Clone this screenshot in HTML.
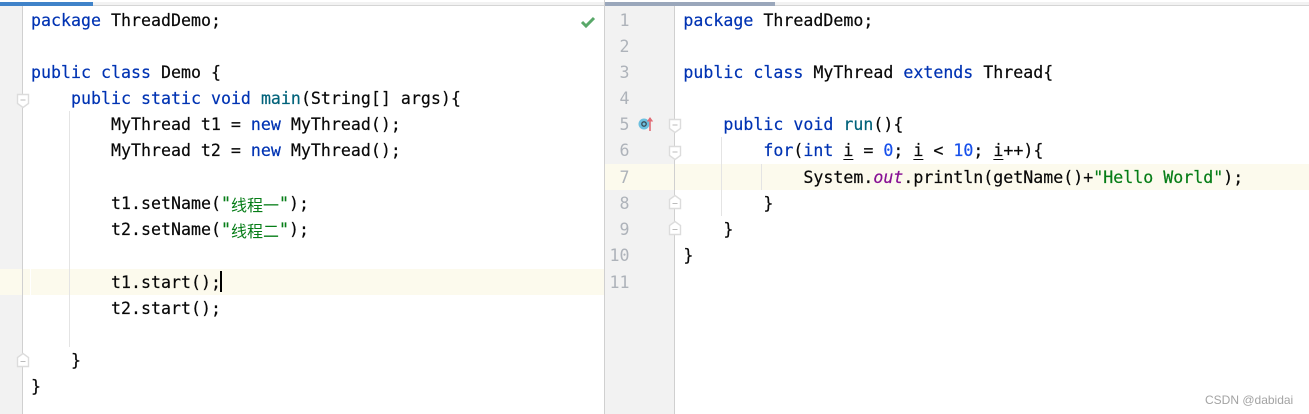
<!DOCTYPE html>
<html><head><meta charset="utf-8">
<style>
html,body{margin:0;padding:0;background:#fff;}
#p{position:relative;width:1309px;height:414px;overflow:hidden;background:#fff;}
.b{position:absolute;}
.l{position:absolute;white-space:pre;font-family:"DejaVu Sans Mono","Liberation Mono","Noto Sans CJK SC",monospace;font-size:16.6px;line-height:26px;height:26px;color:#080808;letter-spacing:.006px;-webkit-text-stroke:.2px currentColor;margin-top:1px;}
.n{position:absolute;width:30px;text-align:right;left:599.5px;font-family:"DejaVu Sans Mono","Liberation Mono",monospace;font-size:16.6px;line-height:26px;color:#aeb3ba;margin-top:1px;}
.k{color:#0033b3}.s{color:#067d17}.d{color:#1750eb}.m{color:#00627a}.o{color:#871094;font-style:italic}.u{text-decoration:underline;text-underline-offset:3px}
.c{font-family:"WenQuanYi Zen Hei","Noto Sans CJK SC",sans-serif;font-size:16px;-webkit-text-stroke:0}
</style></head><body><div id="p">
<!-- backgrounds -->
<div class="b" style="left:0;top:2px;width:1309px;height:3px;background:#f2f2f2"></div>
<div class="b" style="left:0;top:5px;width:1309px;height:1px;background:#d5d5d5"></div>
<div class="b" style="left:0;top:6px;width:22px;height:408px;background:#f2f2f2"></div>
<div class="b" style="left:605px;top:6px;width:69px;height:408px;background:#f2f2f2"></div>
<!-- highlights -->
<div class="b" style="left:0;top:269px;width:604px;height:26px;background:#fcfaed"></div>
<div class="b" style="left:30px;top:269px;width:1px;height:26px;background:#fff"></div>
<div class="b" style="left:605px;top:164px;width:704px;height:26px;background:#fcfaed"></div>
<!-- dividers -->
<div class="b" style="left:22px;top:6px;width:1px;height:408px;background:#d0d0d0"></div>
<div class="b" style="left:604px;top:0;width:1px;height:414px;background:#d0d0d0"></div>
<div class="b" style="left:674px;top:6px;width:1px;height:408px;background:#d0d0d0"></div>
<!-- tabs -->
<div class="b" style="left:0;top:2px;width:93px;height:4px;background:#4083c9"></div>
<div class="b" style="left:605px;top:2px;width:170px;height:4px;background:#9aa7bb"></div>
<!-- indent guides -->
<div class="b" style="left:69px;top:111px;width:1px;height:236px;background:#e4e4e4"></div>
<div class="b" style="left:721px;top:137px;width:1px;height:79px;background:#e4e4e4"></div>
<div class="b" style="left:761px;top:164px;width:1px;height:26px;background:#e4e4e4"></div>

<!-- left code -->
<div class="l" style="left:31px;top:7px"><span class="k">package</span> ThreadDemo;</div>
<div class="l" style="left:31px;top:59px"><span class="k">public class</span> Demo {</div>
<div class="l" style="left:31px;top:85px">    <span class="k">public static void</span> <span class="m">main</span>(String[] args){</div>
<div class="l" style="left:31px;top:111px">        MyThread t1 = <span class="k">new</span> MyThread();</div>
<div class="l" style="left:31px;top:137px">        MyThread t2 = <span class="k">new</span> MyThread();</div>
<div class="l" style="left:111px;top:190px">t1.setName(<span class="s">"</span></div>
<div class="l c s" style="left:231px;top:190px;letter-spacing:0">线程一</div>
<div class="l" style="left:279px;top:190px"><span class="s">"</span>);</div>
<div class="l" style="left:111px;top:216px">t2.setName(<span class="s">"</span></div>
<div class="l c s" style="left:231px;top:216px;letter-spacing:0">线程二</div>
<div class="l" style="left:279px;top:216px"><span class="s">"</span>);</div>
<div class="l" style="left:111px;top:269px">t1.start();</div>
<div class="b" style="left:220px;top:271px;width:2px;height:21px;background:#000"></div>
<div class="l" style="left:111px;top:295px">t2.start();</div>
<div class="l" style="left:71px;top:347px">}</div>
<div class="l" style="left:31px;top:373px">}</div>

<!-- line numbers -->
<div class="n" style="top:7px">1</div>
<div class="n" style="top:33px">2</div>
<div class="n" style="top:59px">3</div>
<div class="n" style="top:85px">4</div>
<div class="n" style="top:111px">5</div>
<div class="n" style="top:137px">6</div>
<div class="n" style="top:164px">7</div>
<div class="n" style="top:190px">8</div>
<div class="n" style="top:216px">9</div>
<div class="n" style="top:242px">10</div>
<div class="n" style="top:269px">11</div>

<!-- right code -->
<div class="l" style="left:683.4px;top:7px"><span class="k">package</span> ThreadDemo;</div>
<div class="l" style="left:683.4px;top:59px"><span class="k">public class</span> MyThread <span class="k">extends</span> Thread{</div>
<div class="l" style="left:683.4px;top:111px">    <span class="k">public void</span> <span class="m">run</span>(){</div>
<div class="l" style="left:683.4px;top:137px">        <span class="k">for</span>(<span class="k">int</span> <span class="u">i</span> = <span class="d">0</span>; <span class="u">i</span> &lt; <span class="d">10</span>; <span class="u">i</span>++){</div>
<div class="l" style="left:683.4px;top:164px">            System.<span class="o">out</span>.println(getName()+<span class="s">"Hello World"</span>);</div>
<div class="l" style="left:683.4px;top:190px">        }</div>
<div class="l" style="left:683.4px;top:216px">    }</div>
<div class="l" style="left:683.4px;top:242px">}</div>

<!-- check mark -->
<svg class="b" style="left:580px;top:15px" width="16" height="14" viewBox="0 0 16 14"><path d="M2 7 L6 11 L14 3" fill="none" stroke="#59a869" stroke-width="3"/></svg>

<!-- override icon -->
<svg class="b" style="left:636px;top:114px" width="20" height="20" viewBox="0 0 20 20">
<circle cx="8" cy="10" r="5.5" fill="#6cc0e0"/><circle cx="8" cy="10" r="2.2" fill="none" stroke="#3a4a55" stroke-width="1.3"/>
<path d="M14 17 V4" stroke="#e06c75" stroke-width="1.6" fill="none"/><path d="M10.8 7.5 L14 3 L17.2 7.5 Z" fill="#e06c75"/></svg>

<!-- fold markers: down -->
<svg class="b" style="left:15.5px;top:92.5px" width="14" height="16" viewBox="0 0 14 16"><path d="M1.5 1.5H12.5V10.5L7 14.5L1.5 10.5Z" fill="#fff" stroke="#dcdcdc" stroke-width="1.4"/><path d="M4.5 7H9.5" stroke="#bbb"/></svg>
<svg class="b" style="left:668px;top:118px" width="14" height="16" viewBox="0 0 14 16"><path d="M1.5 1.5H12.5V10.5L7 14.5L1.5 10.5Z" fill="#fff" stroke="#dcdcdc" stroke-width="1.4"/><path d="M4.5 7H9.5" stroke="#bbb"/></svg>
<svg class="b" style="left:668px;top:145px" width="14" height="16" viewBox="0 0 14 16"><path d="M1.5 1.5H12.5V10.5L7 14.5L1.5 10.5Z" fill="#fff" stroke="#dcdcdc" stroke-width="1.4"/><path d="M4.5 7H9.5" stroke="#bbb"/></svg>
<!-- fold markers: up -->
<svg class="b" style="left:15.5px;top:352px" width="14" height="16" viewBox="0 0 14 16"><path d="M1.5 14.5H12.5V5.5L7 1.5L1.5 5.5Z" fill="#fff" stroke="#dcdcdc" stroke-width="1.4"/><path d="M4.5 9.5H9.5" stroke="#bbb"/></svg>
<svg class="b" style="left:668px;top:194px" width="14" height="16" viewBox="0 0 14 16"><path d="M1.5 14.5H12.5V5.5L7 1.5L1.5 5.5Z" fill="#fff" stroke="#dcdcdc" stroke-width="1.4"/><path d="M4.5 9.5H9.5" stroke="#bbb"/></svg>
<svg class="b" style="left:668px;top:220px" width="14" height="16" viewBox="0 0 14 16"><path d="M1.5 14.5H12.5V5.5L7 1.5L1.5 5.5Z" fill="#fff" stroke="#dcdcdc" stroke-width="1.4"/><path d="M4.5 9.5H9.5" stroke="#bbb"/></svg>

<!-- watermark -->
<div class="b" style="left:1205px;top:392px;font-family:'Liberation Sans',sans-serif;font-size:12px;line-height:16px;color:#a3a3a3;white-space:pre">CSDN @dabidai</div>
</div></body></html>
